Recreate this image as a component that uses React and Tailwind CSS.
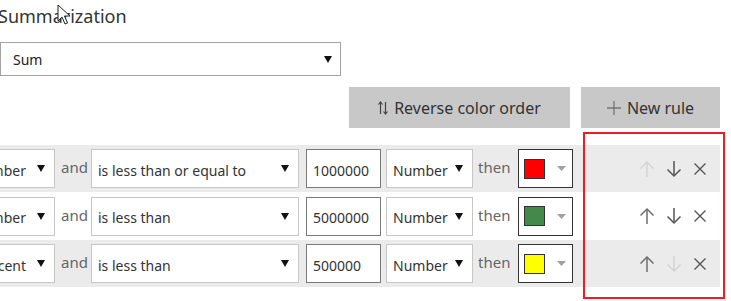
import React from 'react';

const FONT = { fontFamily: '"Noto Sans", "Open Sans", sans-serif' };

// Small black caret used by the plain dropdowns
const Caret = () => (
    <svg width="8" height="7" viewBox="0 0 8 7" className="shrink-0">
        <path d="M0 0 H8 L4 7 Z" fill="#111" />
    </svg>
);

const Dropdown = ({ label, className = '' }) => (
    <div className={`h-[39px] bg-white border border-[#c6c6c6] flex items-center pr-[9px] text-[14px] text-[#333] whitespace-nowrap overflow-hidden ${className}`}>
        <span className="pt-[3px]">{label}</span>
        <Caret />
    </div>
);

const ArrowUp = ({ color }) => (
    <svg width="16" height="18" viewBox="0 0 16 18" fill="none" stroke={color} strokeWidth="1.5">
        <path d="M8 17 V2" />
        <path d="M1.5 8.5 L8 2 L14.5 8.5" />
    </svg>
);

const ArrowDown = ({ color }) => (
    <svg width="16" height="18" viewBox="0 0 16 18" fill="none" stroke={color} strokeWidth="1.5">
        <path d="M8 1 V16" />
        <path d="M1.5 9.5 L8 16 L14.5 9.5" />
    </svg>
);

const Cross = () => (
    <svg width="14" height="14" viewBox="0 0 14 14" fill="none" stroke="#555" strokeWidth="1.4">
        <path d="M1.5 1.5 L12.5 12.5 M12.5 1.5 L1.5 12.5" />
    </svg>
);

const rules = [
    { kind: 'Number', op: 'is less than or equal to', value: '1000000', swatch: 'bg-[#ff0000]', bg: 'bg-[#ebebeb]', h: 'h-[47px]', upOff: true, downOff: false },
    { kind: 'Number', op: 'is less than', value: '5000000', swatch: 'bg-[#43894a]', bg: 'bg-white', h: 'h-[48px]', upOff: false, downOff: false },
    { kind: 'Percent', op: 'is less than', value: '500000', swatch: 'bg-[#ffff00]', bg: 'bg-[#ebebeb]', h: 'h-[47px]', upOff: false, downOff: true },
];

const RuleRow = ({ rule }) => (
    <div className={`flex items-center ${rule.h} ${rule.bg} w-[720px]`}>
        <Dropdown label={rule.kind} className="w-[100px] ml-[-45px] justify-end gap-[11px]" />
        <span className="ml-[6px] w-[30px] text-[15px] text-[#666] -mt-[2px]">and</span>
        <Dropdown label={rule.op} className="w-[208px] justify-between pl-[6px]" />
        <div className="ml-[7px] w-[75px] h-[39px] bg-white border border-[#7a7a7a] flex items-center pl-[6px] pt-[3px] text-[14px] text-[#333]">
            {rule.value}
        </div>
        <Dropdown label="Number" className="ml-[5px] w-[87px] justify-between pl-[6px]" />
        <span className="ml-[5px] w-[35px] text-[15px] text-[#666] -mt-[2px]">then</span>
        <div className="ml-[5px] w-[55px] h-[39px] bg-white border-[1.5px] border-[#333] flex items-center pl-[5px]">
            <div className={`w-[21px] h-[20px] border border-[#333] ${rule.swatch}`} />
            <svg width="9" height="5" viewBox="0 0 9 5" className="ml-[12px]">
                <path d="M0 0 H9 L4.5 5 Z" fill="#a0a0a0" />
            </svg>
        </div>
        <div className="flex-1 flex items-center justify-end gap-[11px] pr-[13px]">
            <ArrowUp color={rule.upOff ? '#d4d4d4' : '#6e6e6e'} />
            <ArrowDown color={rule.downOff ? '#d4d4d4' : '#555'} />
            <Cross />
        </div>
    </div>
);

export default function App() {
    return (
        <div className="relative w-[731px] h-[301px] bg-white overflow-hidden" style={FONT}>
            <div className="pt-[3px] ml-[-2px] text-[18px] leading-[26px] text-[#333]">Summarization</div>

            <div className="mt-[13px] w-[341px] h-[34px] border border-[#a3a3a3] flex items-center justify-between pl-[12px] pr-[8px] text-[14px] text-[#222]">
                <span>Sum</span>
                <Caret />
            </div>

            <div className="mt-[11px] flex justify-end gap-[11px] pr-[11px]">
                <button className="w-[221px] h-[41px] bg-[#c8c8c8] flex items-center justify-center gap-[6px] text-[16px] text-[#333]">
                    <svg width="10" height="14" viewBox="0 0 10 14" fill="none" stroke="#444" strokeWidth="1.2">
                        <path d="M2.5 13 V1 M0.5 3.5 L2.5 1 L4.5 3.5" />
                        <path d="M7.5 1 V13 M5.5 10.5 L7.5 13 L9.5 10.5" />
                    </svg>
                    Reverse color order
                </button>
                <button className="w-[139px] h-[41px] bg-[#c8c8c8] flex items-center justify-center gap-[6px] text-[16px] text-[#333]">
                    <svg width="14" height="14" viewBox="0 0 14 14" stroke="#777" strokeWidth="1.3">
                        <path d="M7 0 V14 M0 7 H14" />
                    </svg>
                    New rule
                </button>
            </div>

            <div className="mt-[17px]">
                {rules.map((r, i) => (
                    <RuleRow key={i} rule={r} />
                ))}
            </div>

            {/* red annotation box */}
            <div className="absolute left-[583px] top-[132px] w-[142px] h-[167px] border-2 border-[#ee1c25] pointer-events-none" />

            {/* mouse pointer */}
            <svg className="absolute left-[57px] top-[4px]" width="14" height="22" viewBox="0 0 14 22">
                <path d="M1 1 V17 L5 13 L8 20 L10.5 19 L7.5 12 H13 Z" fill="#fff" stroke="#222" strokeWidth="1" strokeLinejoin="round" />
            </svg>
        </div>
    );
}
